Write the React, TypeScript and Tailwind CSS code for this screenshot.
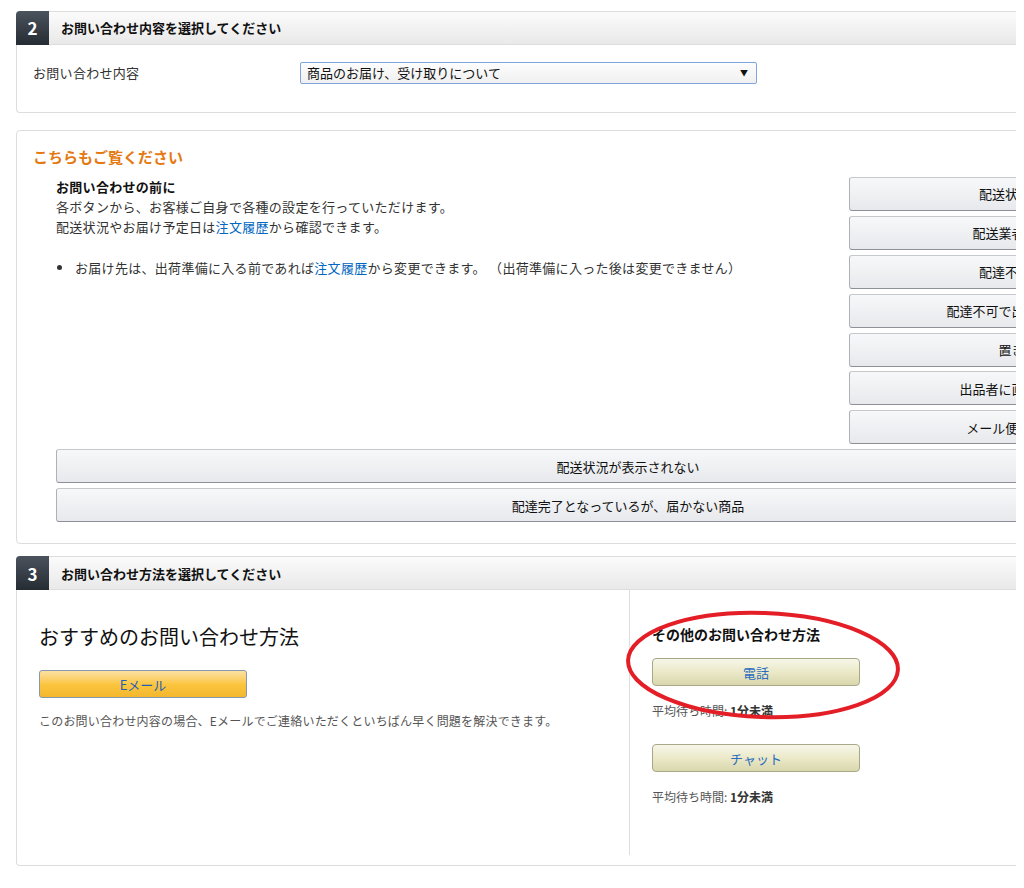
import React from 'react';

const font = { fontFamily: '"Noto Sans CJK JP", "Noto Sans", sans-serif' };

// 右側のセルフサービスボタン
const sideButtons = [
  '配送状況を確認する',
  '配送業者の連絡先一覧',
  '配達不在票が届いた',
  '配達不可で出品者に返送された',
  '置き配の設定',
  '出品者に直接問い合わせる',
  'メール便の配達について',
];

const GrayButton: React.FC<{ label: string; className?: string }> = ({ label, className = '' }) => (
  <button
    className={`h-[34px] rounded-[3px] border border-[#adb1b8] border-t-[#c6c8cc] border-b-[#8d9096] bg-gradient-to-b from-[#f7f8fa] to-[#e7e9ec] text-[13px] text-[#111] text-center ${className}`}
  >
    {label}
  </button>
);

const SectionHeader: React.FC<{ num: string; title: string }> = ({ num, title }) => (
  <div className="flex h-[34px] border border-[#ddd] rounded-t-[4px] bg-gradient-to-b from-[#fbfbfb] to-[#e9e9e9]">
    <div className="w-[33px] -ml-px -mt-px h-[34px] rounded-tl-[4px] bg-gradient-to-b from-[#4b535e] to-[#262c33] flex items-center justify-center text-white text-[17px] font-bold">
      {num}
    </div>
    <div className="pl-3 flex items-center text-[13px] font-bold text-[#111]">{title}</div>
  </div>
);

const WaitTime = () => (
  <div className="mt-[16px] text-[12px] text-[#555]">
    平均待ち時間: <span className="font-bold text-[#333]">1分未満</span>
  </div>
);

export default function App() {
  return (
    <div className="w-[1024px] h-[888px] bg-white" style={font}>
      <div className="w-[1016px] h-[888px] overflow-hidden">
        <div className="w-[1226px] ml-4 pt-[11px]">
          {/* セクション2 */}
          <SectionHeader num="2" title="お問い合わせ内容を選択してください" />
          <div className="h-[68px] border border-t-0 border-[#ddd] rounded-b-[4px] flex items-start pl-4 pt-[17px]">
            <div className="w-[267px] text-[13px] text-[#333] leading-[22px] tracking-[0.3px]">お問い合わせ内容</div>
            <div className="w-[457px] h-[22px] border border-[#7fa6dc] rounded-[2px] bg-gradient-to-b from-[#fdfdfd] to-[#f0f0f0] flex items-center justify-between pl-[6px] pr-[8px] text-[13px] text-[#111]">
              <span>商品のお届け、受け取りについて</span>
              <span className="text-[8px]">▼</span>
            </div>
          </div>

          {/* こちらもご覧ください */}
          <div className="mt-[17px] border border-[#ddd] rounded-[4px] pt-[15px] pb-[21px]">
            <div className="pl-4 text-[15px] font-bold text-[#e47911] leading-[22px]">こちらもご覧ください</div>
            <div className="flex pl-[39px] pr-[15px] mt-[9px]">
              <div className="flex-1 text-[13px] text-[#333] leading-[20px] tracking-[0.3px]">
                <div className="font-bold text-[#111]">お問い合わせの前に</div>
                <div>各ボタンから、お客様ご自身で各種の設定を行っていただけます。</div>
                <div>
                  配送状況やお届け予定日は<span className="text-[#0066c0]">注文履歴</span>から確認できます。
                </div>
                <ul className="mt-[21px] pl-[18px] list-disc marker:text-[#333]">
                  <li className="pl-[1px]">
                    お届け先は、出荷準備に入る前であれば<span className="text-[#0066c0]">注文履歴</span>
                    から変更できます。 （出荷準備に入った後は変更できません）
                  </li>
                </ul>
              </div>
              <div className="w-[377px] flex flex-col gap-[4.9px]">
                {sideButtons.map((b) => (
                  <GrayButton key={b} label={b} />
                ))}
              </div>
            </div>
            <div className="flex flex-col gap-[5px] pl-[39px] pr-[41px] mt-[5px]">
              <GrayButton label="配送状況が表示されない" />
              <GrayButton label="配達完了となっているが、届かない商品" />
            </div>
          </div>

          {/* セクション3 */}
          <div className="mt-[12px]">
            <SectionHeader num="3" title="お問い合わせ方法を選択してください" />
            <div className="relative h-[276px] border border-t-0 border-[#ddd] rounded-b-[4px] flex">
              <div className="w-[612px] pl-[22px] pt-[33px]">
                <div className="text-[20px] text-[#111] leading-[28px]">おすすめのお問い合わせ方法</div>
                <button className="mt-[19px] w-[208px] h-[28px] rounded-[3px] border border-[#8797b0] bg-gradient-to-b from-[#fbe1a1] via-[#fbc63f] to-[#f3b72c] text-[13px] text-[#1f5fb9]">
                  Eメール
                </button>
                <div className="mt-[14px] text-[12px] text-[#555] tracking-[0.2px]">
                  このお問い合わせ内容の場合、Eメールでご連絡いただくといちばん早く問題を解決できます。
                </div>
              </div>
              <div className="h-[265px] w-px bg-[#ddd]" />
              <div className="pl-[22px] pt-[33px]">
                <div className="text-[14px] font-bold text-[#111] leading-[22px]">その他のお問い合わせ方法</div>
                <button className="mt-[13px] w-[208px] h-[28px] rounded-[4px] border border-[#a9a886] bg-gradient-to-b from-[#f6f6ea] via-[#ebe9c8] to-[#d9d7ad] text-[13px] text-[#2a6cbf]">
                  電話
                </button>
                <WaitTime />
                <button className="mt-[24px] w-[208px] h-[28px] rounded-[4px] border border-[#a9a886] bg-gradient-to-b from-[#f6f6ea] via-[#ebe9c8] to-[#d9d7ad] text-[13px] text-[#2a6cbf]">
                  チャット
                </button>
                <WaitTime />
              </div>
              {/* 赤丸の書き込み */}
              <svg className="absolute left-[600px] top-[18px]" width="300" height="120" viewBox="0 0 300 120">
                <ellipse cx="146" cy="57" rx="135" ry="52" transform="rotate(2 146 57)" fill="none" stroke="#e41e26" strokeWidth="4" />
              </svg>
            </div>
          </div>
        </div>
      </div>
    </div>
  );
}
